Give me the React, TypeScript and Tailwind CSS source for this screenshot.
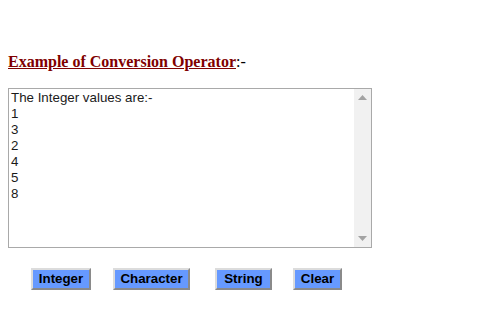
const values = ["1", "3", "2", "4", "5", "8"];
const buttons = [
  { label: "Integer", cls: "ml-[23px] w-[60px]" },
  { label: "Character", cls: "ml-[22px] w-[77px]" },
  { label: "String", cls: "ml-[25px] w-[57px]" },
  { label: "Clear", cls: "ml-[21px] w-[49px]" },
];

function Scrollbar() {
  return (
    <div className="flex w-[17px] flex-col items-center justify-between bg-[#f1f1f1] py-[6px]">
      <svg width="9" height="5" viewBox="0 0 9 5">
        <polygon points="4.5,0 9,5 0,5" fill="#a3a3a3" />
      </svg>
      <svg width="9" height="5" viewBox="0 0 9 5">
        <polygon points="0,0 9,0 4.5,5" fill="#a3a3a3" />
      </svg>
    </div>
  );
}

export default function App() {
  return (
    <div className="h-[321px] w-[494px] bg-white px-2 pt-[52px] font-['Liberation_Sans',Arial,sans-serif]">
      <h2 className="font-['Liberation_Serif','Times_New_Roman',serif] text-[16px] font-bold leading-[20px]">
        <span className="text-[#800000] underline">Example of Conversion Operator</span>
        <span className="font-normal text-black">:-</span>
      </h2>
      <div className="mt-[16px] flex h-[160px] w-[364px] border border-[#a9a9a9]">
        <div className="flex-1 px-[2px] pt-[1px] text-[13.33px] leading-[16px] text-[#1a1a1a]">
          <div>The Integer values are:-</div>
          {values.map((v, i) => (
            <div key={i}>{v}</div>
          ))}
        </div>
        <Scrollbar />
      </div>
      <div className="mt-[20px] flex">
        {buttons.map((b) => (
          <button
            key={b.label}
            className={`${b.cls} h-[22px] border-2 border-t-[#dcdcdc] border-l-[#dcdcdc] border-r-[#8a8a8a] border-b-[#8a8a8a] bg-[#6699ff] text-center text-[13.33px] font-bold leading-[16px] text-black`}
          >
            {b.label}
          </button>
        ))}
      </div>
    </div>
  );
}
